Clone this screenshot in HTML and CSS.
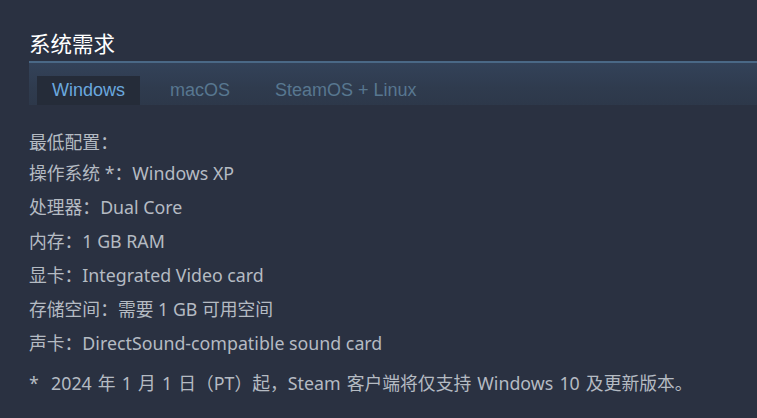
FILE: index.html
```html
<!DOCTYPE html>
<html lang="zh-CN">
<head>
<meta charset="utf-8">
<link rel="stylesheet" href="styles.css">
</head>
<body>
<div class="sysreq">
  <h2 class="title">系统需求</h2>
  <div class="tabs">
    <div class="tab active">Windows</div>
    <div class="tab">macOS</div>
    <div class="tab">SteamOS + Linux</div>
  </div>
  <ul class="reqs">
    <li class="head">最低配置：</li>
    <li>操作系统 *：Windows XP</li>
    <li>处理器：Dual Core</li>
    <li>内存：1 GB RAM</li>
    <li>显卡：Integrated Video card</li>
    <li>存储空间：需要 1 GB 可用空间</li>
    <li>声卡：DirectSound-compatible sound card</li>
  </ul>
  <p class="note">*&nbsp; 2024 年 1 月 1 日（PT）起，Steam 客户端将仅支持 Windows 10 及更新版本。</p>
</div>
</body>
</html>
```
FILE: styles.css
```css
html, body {
  margin: 0;
  padding: 0;
  background: #2a3141;
}
body {
  width: 757px;
  height: 418px;
  overflow: hidden;
  font-family: "Noto Sans", "Noto Sans CJK SC", sans-serif;
}
.sysreq {
  padding: 29px 0 0 29px;
}
.title {
  margin: 0 0 4px 0;
  font-size: 21.5px;
  line-height: 28px;
  font-weight: normal;
  color: #ffffff;
  font-family: "Noto Sans CJK SC", sans-serif;
}
.tabs {
  display: flex;
  align-items: flex-end;
  height: 42px;
  padding-left: 8px;
  border-top: 2px solid #4a6886;
  background: linear-gradient(180deg, #334259 0%, #2f3b4e 60%, #2d384a 100%);
}
.tab {
  height: 29px;
  padding: 0 15px;
  margin-right: 15px;
  font-family: "Liberation Sans", Arial, sans-serif;
  font-size: 18px;
  line-height: 29px;
  color: #587790;
}
.tab.active {
  background: #252c39;
  color: #6aa8de;
}
.reqs {
  list-style: none;
  margin: 20px 0 0 0;
  padding: 0;
  font-size: 17.8px;
  color: #b5bbc3;
}
.reqs li {
  line-height: 34px;
  height: 34px;
}
.reqs li.head {
  height: 31px;
}
.note {
  margin: 6px 0 0 0;
  font-size: 17.8px;
  line-height: 34px;
  word-spacing: 1.5px;
  color: #b5bbc3;
}
```
